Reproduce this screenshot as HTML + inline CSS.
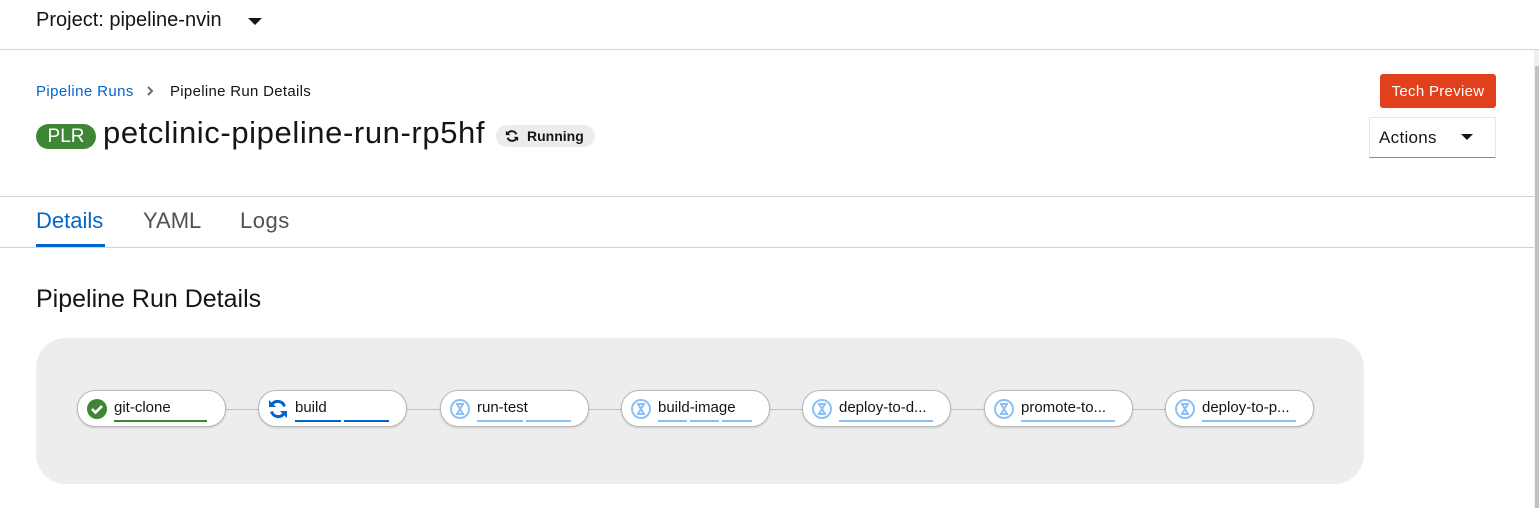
<!DOCTYPE html>
<html><head><style>
body{margin:0;width:1539px;height:508px;background:#fff;font-family:"Liberation Sans",sans-serif;color:#151515;position:relative;overflow:hidden}
.a{position:absolute;white-space:nowrap}
.node{position:absolute;top:390px;width:147px;height:35px;border:1px solid #b8b8b8;border-radius:18px;background:#fff;box-shadow:0 1px 2px rgba(0,0,0,.15)}
.node .lbl{position:absolute;left:36px;top:8px;font-size:15px}
.node .ic{position:absolute;left:9px;top:8px;width:20px;height:20px}
.bar{position:absolute;top:29px;height:2px}
.ln{position:absolute;top:409px;height:1px;background:#c0c0c0}
</style></head><body>
<div class="a" style="left:36px;top:9px;font-size:20px">Project: pipeline-nvin</div>
<svg class="a" style="left:248px;top:18px" width="14" height="8"><path d="M0 0h14L7 7z" fill="#151515"/></svg>
<div class="a" style="left:0;top:49px;width:1539px;height:1px;background:#d2d2d2"></div>
<div class="a" style="left:1534px;top:50px;width:5px;height:458px;background:#f0f0f0"></div>
<div class="a" style="left:1535px;top:66px;width:4px;height:442px;background:#c1c1c1"></div>
<div class="a" style="left:36px;top:83px;font-size:15px;letter-spacing:.4px;color:#0066cc">Pipeline Runs</div>
<svg class="a" style="left:147px;top:86px" width="8" height="10"><path d="M1 1l4 4-4 4" stroke="#6a6e73" stroke-width="2" fill="none"/></svg>
<div class="a" style="left:170px;top:83px;font-size:15px;letter-spacing:.3px">Pipeline Run Details</div>
<div class="a" style="left:36px;top:124px;width:60px;height:25px;border-radius:13px;background:#3e8635;color:#fff;font-size:19px;line-height:25px;text-align:center">PLR</div>
<div class="a" style="left:103px;top:115px;font-size:31px;letter-spacing:.6px">petclinic-pipeline-run-rp5hf</div>
<div class="a" style="left:496px;top:125px;width:99px;height:22px;border-radius:11px;background:#ececec"></div>
<svg class="a" style="left:505px;top:129px" width="14" height="14" viewBox="0 0 16 16"><path d="M13 6A5.5 5.5 0 0 0 3.2 5M3 10a5.5 5.5 0 0 0 9.8 1" stroke="#151515" stroke-width="2.2" fill="none"/><path d="M1 2v5h5zM15 14V9h-5z" fill="#151515"/></svg>
<div class="a" style="left:527px;top:128px;font-size:14px;font-weight:bold">Running</div>
<div class="a" style="left:1380px;top:74px;width:116px;height:34px;border-radius:3px;background:#e0401c;color:#fff;font-size:15px;letter-spacing:.3px;line-height:35px;text-align:center">Tech Preview</div>
<div class="a" style="left:1369px;top:117px;width:125px;height:39px;border:1px solid #e6e6e6;border-bottom:1px solid #8a8d90"></div>
<div class="a" style="left:1379px;top:128px;font-size:17px;letter-spacing:.3px">Actions</div>
<svg class="a" style="left:1461px;top:134px" width="12" height="7"><path d="M0 0h12L6 6z" fill="#151515"/></svg>
<div class="a" style="left:0;top:196px;width:1534px;height:1px;background:#d2d2d2"></div>
<div class="a" style="left:36px;top:208px;font-size:22px;color:#0066cc">Details</div>
<div class="a" style="left:36px;top:244px;width:69px;height:3px;background:#0066cc"></div>
<div class="a" style="left:143px;top:208px;font-size:22px;color:#4f5255">YAML</div>
<div class="a" style="left:240px;top:208px;font-size:22px;letter-spacing:.5px;color:#4f5255">Logs</div>
<div class="a" style="left:0;top:247px;width:1534px;height:1px;background:#d2d2d2"></div>
<div class="a" style="left:36px;top:285px;font-size:25px">Pipeline Run Details</div>
<div class="a" style="left:36px;top:338px;width:1328px;height:146px;border-radius:30px;background:#ededed"></div>
<div class="ln" style="left:226px;width:1088px"></div>

<div class="node" style="left:77px"><svg class="ic" viewBox="0 0 20 20"><circle cx="10" cy="10" r="10" fill="#3e8635"/><path d="M5 10l3.5 3.5L15 7" stroke="#fff" stroke-width="2.6" fill="none"/></svg><span class="lbl">git-clone</span><div class="bar" style="left:36px;width:93px;background:#3e8635"></div></div>
<div class="node" style="left:258px"><svg class="ic" viewBox="0 0 20 20"><path d="M16.5 7.5A7 7 0 0 0 4 5.5M3.5 12.5A7 7 0 0 0 16 14.5" stroke="#0066cc" stroke-width="3" fill="none"/><path d="M1 1v7h7zM19 19v-7h-7z" fill="#0066cc"/></svg><span class="lbl">build</span><div class="bar" style="left:36px;width:46px;background:#0066cc"></div><div class="bar" style="left:85px;width:45px;background:#0066cc"></div></div>
<div class="node" style="left:440px"><svg class="ic" viewBox="0 0 20 20"><circle cx="10" cy="10" r="9" fill="none" stroke="#8bc1f7" stroke-width="2"/><path d="M6 5h8M6 15h8M7 5l6 10M13 5L7 15" stroke="#8bc1f7" stroke-width="2"/></svg><span class="lbl">run-test</span><div class="bar" style="left:36px;width:46px;background:#8bc1f7"></div><div class="bar" style="left:85px;width:45px;background:#8bc1f7"></div></div>
<div class="node" style="left:621px"><svg class="ic" viewBox="0 0 20 20"><circle cx="10" cy="10" r="9" fill="none" stroke="#8bc1f7" stroke-width="2"/><path d="M6 5h8M6 15h8M7 5l6 10M13 5L7 15" stroke="#8bc1f7" stroke-width="2"/></svg><span class="lbl">build-image</span><div class="bar" style="left:36px;width:29px;background:#8bc1f7"></div><div class="bar" style="left:68px;width:29px;background:#8bc1f7"></div><div class="bar" style="left:100px;width:30px;background:#8bc1f7"></div></div>
<div class="node" style="left:802px"><svg class="ic" viewBox="0 0 20 20"><circle cx="10" cy="10" r="9" fill="none" stroke="#8bc1f7" stroke-width="2"/><path d="M6 5h8M6 15h8M7 5l6 10M13 5L7 15" stroke="#8bc1f7" stroke-width="2"/></svg><span class="lbl">deploy-to-d...</span><div class="bar" style="left:36px;width:94px;background:#8bc1f7"></div></div>
<div class="node" style="left:984px"><svg class="ic" viewBox="0 0 20 20"><circle cx="10" cy="10" r="9" fill="none" stroke="#8bc1f7" stroke-width="2"/><path d="M6 5h8M6 15h8M7 5l6 10M13 5L7 15" stroke="#8bc1f7" stroke-width="2"/></svg><span class="lbl">promote-to...</span><div class="bar" style="left:36px;width:94px;background:#8bc1f7"></div></div>
<div class="node" style="left:1165px"><svg class="ic" viewBox="0 0 20 20"><circle cx="10" cy="10" r="9" fill="none" stroke="#8bc1f7" stroke-width="2"/><path d="M6 5h8M6 15h8M7 5l6 10M13 5L7 15" stroke="#8bc1f7" stroke-width="2"/></svg><span class="lbl">deploy-to-p...</span><div class="bar" style="left:36px;width:94px;background:#8bc1f7"></div></div>
</body></html>
